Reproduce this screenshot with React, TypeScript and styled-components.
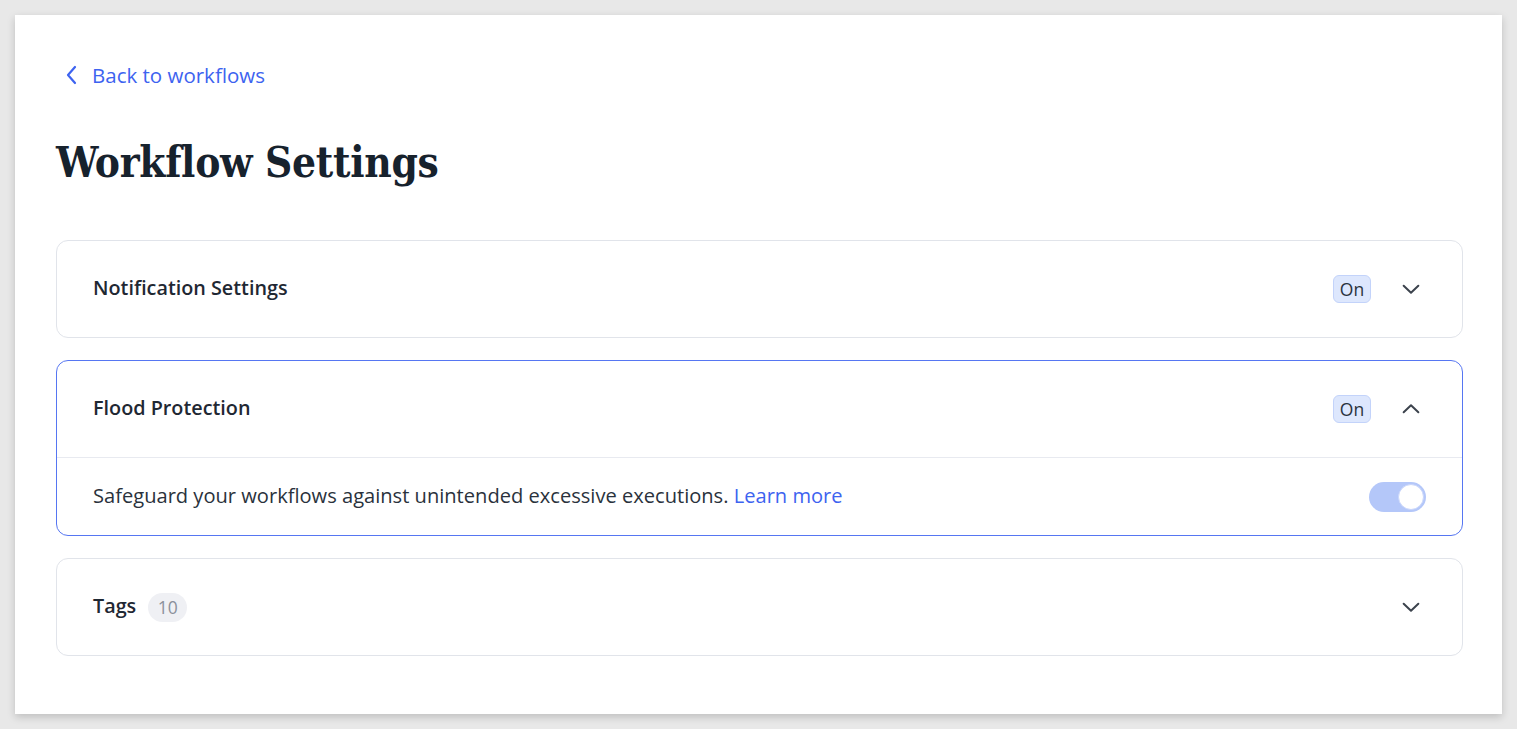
import React, { useState } from "react";
import styled, { createGlobalStyle } from "styled-components";

const Global = createGlobalStyle`
  html, body { margin: 0; padding: 0; }
  body {
    background: #e8e8e8;
    font-family: "Open Sans", "Noto Sans", sans-serif;
    color: #1d2631;
  }
  * { box-sizing: border-box; }
`;

const Page = styled.div`
  padding: 15px;
  min-height: 729px;
`;

const Card = styled.main`
  background: #ffffff;
  height: 699px;
  box-shadow: 0 3px 8px rgba(0, 0, 0, 0.18);
  padding: 46px 39px 0 41px;
`;

const BackLink = styled.a`
  display: inline-flex;
  align-items: center;
  gap: 14px;
  color: #3d63f0;
  font-size: 20.5px;
  line-height: 28px;
  text-decoration: none;
  padding-left: 10px;
  cursor: pointer;
`;

const Title = styled.h1`
  margin: 45px 0 49px;
  font-family: "DejaVu Serif", "Liberation Serif", serif;
  font-stretch: condensed;
  font-weight: 700;
  font-size: 42px;
  line-height: 56px;
  letter-spacing: -0.3px;
  color: #17222d;
`;

const List = styled.div`
  display: flex;
  flex-direction: column;
  gap: 22px;
`;

const Panel = styled.section<{ $open?: boolean }>`
  border: 1px solid ${(p) => (p.$open ? "#5676f2" : "#e1e4ea")};
  border-radius: 12px;
  background: #fff;
`;

const Header = styled.div`
  height: 96px;
  display: flex;
  align-items: center;
  padding: 0 39px 0 36px;
  gap: 12px;
`;

const PanelTitle = styled.div`
  font-size: 19.8px;
  font-weight: 600;
  color: #1f2833;
  padding-bottom: 3px;
`;

const Spacer = styled.div`
  flex: 1;
`;

const OnBadge = styled.span`
  display: inline-flex;
  align-items: center;
  justify-content: center;
  width: 38px;
  height: 28px;
  border-radius: 6px;
  background: #dde7fd;
  border: 1px solid #c3d3fa;
  font-size: 17.5px;
  color: #2b333d;
  margin-right: 16px;
`;

const CountPill = styled.span`
  display: inline-flex;
  align-items: center;
  justify-content: center;
  width: 39px;
  height: 29px;
  border-radius: 15px;
  background: #eff0f4;
  color: #8b909b;
  font-size: 17.5px;
`;

const ChevronBtn = styled.button`
  border: 0;
  background: none;
  padding: 0;
  width: 24px;
  height: 24px;
  display: flex;
  align-items: center;
  justify-content: center;
  color: #3c434d;
  cursor: pointer;
`;

const Body = styled.div`
  border-top: 1px solid #e8eaf0;
  height: 78px;
  display: flex;
  align-items: center;
  padding: 0 36px 0 36px;
`;

const BodyText = styled.p`
  margin: 0;
  flex: 1;
  font-size: 20.1px;
  color: #2a323c;
  padding-bottom: 3px;
`;

const InlineLink = styled.a`
  color: #3d63f0;
  text-decoration: none;
`;

const Toggle = styled.button<{ $on: boolean }>`
  width: 57px;
  height: 30px;
  border-radius: 15px;
  border: 0;
  padding: 2px;
  background: ${(p) => (p.$on ? "#b4c7f9" : "#d9dce2")};
  display: flex;
  justify-content: ${(p) => (p.$on ? "flex-end" : "flex-start")};
  align-items: center;
  cursor: pointer;
`;

const Knob = styled.span`
  width: 26px;
  height: 26px;
  border-radius: 50%;
  background: #fff;
  border: 1px solid #c9d6fb;
`;

const Chevron = ({ up }: { up?: boolean }) => (
  <svg width="22" height="22" viewBox="0 0 24 24" fill="none" stroke="currentColor" strokeWidth="2.2" strokeLinecap="round" strokeLinejoin="round">
    {up ? <path d="M4 15.5l8-7.5 8 7.5" /> : <path d="M4 8.5l8 7.5 8-7.5" />}
  </svg>
);

export default function App() {
  const [on, setOn] = useState(true);
  return (
    <Page>
      <Global />
      <Card>
        <BackLink>
          <svg width="12" height="20" viewBox="0 0 12 20" fill="none" stroke="currentColor" strokeWidth="2.2" strokeLinecap="round" strokeLinejoin="round">
            <path d="M9 2L2 10l7 8" />
          </svg>
          Back to workflows
        </BackLink>
        <Title>Workflow Settings</Title>
        <List>
          <Panel>
            <Header>
              <PanelTitle>Notification Settings</PanelTitle>
              <Spacer />
              <OnBadge>On</OnBadge>
              <ChevronBtn aria-label="Expand"><Chevron /></ChevronBtn>
            </Header>
          </Panel>
          <Panel $open>
            <Header>
              <PanelTitle>Flood Protection</PanelTitle>
              <Spacer />
              <OnBadge>On</OnBadge>
              <ChevronBtn aria-label="Collapse"><Chevron up /></ChevronBtn>
            </Header>
            <Body>
              <BodyText>
                Safeguard your workflows against unintended excessive executions.{" "}
                <InlineLink>Learn more</InlineLink>
              </BodyText>
              <Toggle $on={on} onClick={() => setOn(!on)} aria-label="Toggle flood protection">
                <Knob />
              </Toggle>
            </Body>
          </Panel>
          <Panel>
            <Header>
              <PanelTitle>Tags</PanelTitle>
              <CountPill>10</CountPill>
              <Spacer />
              <ChevronBtn aria-label="Expand"><Chevron /></ChevronBtn>
            </Header>
          </Panel>
        </List>
      </Card>
    </Page>
  );
}
